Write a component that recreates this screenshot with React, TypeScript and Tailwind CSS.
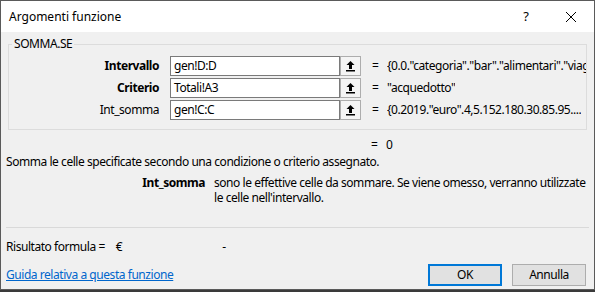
const font = { fontFamily: '"Noto Sans", "Open Sans", sans-serif' };

interface ArgRow {
  label: string;
  bold: boolean;
  value: string;
  result: string;
}

const rows: ArgRow[] = [
  { label: "Intervallo", bold: true, value: "gen!D:D", result: '{0.0."categoria"."bar"."alimentari"."viaggi"' },
  { label: "Criterio", bold: true, value: "Totali!A3", result: '"acquedotto"' },
  { label: "Int_somma", bold: false, value: "gen!C:C", result: '{0.2019."euro".4,5.152.180.30.85.95....' },
];

function RefButton() {
  return (
    <div className="shrink-0 w-[21px] h-[20px] border border-[#adadad] bg-[#f4f4f4] flex items-center justify-center">
      <svg width="11" height="12" viewBox="0 0 11 12">
        <path d="M5.5 1 L1.5 5 H4 V9 H7 V5 H9.5 Z" fill="#000" />
        <rect x="1" y="10" width="9" height="1.5" fill="#000" />
      </svg>
    </div>
  );
}

export default function App() {
  return (
    <div className="w-[595px] h-[292px] bg-[#3a3a3a] overflow-hidden text-[12px] text-black" style={font}>
      <div className="h-[290px] border border-[#5a5a5a] bg-[#f0f0f0] flex flex-col tracking-[-0.45px]">
        {/* Title bar */}
        <div className="h-[31px] bg-white flex items-center pl-2 pr-3 tracking-normal">
          <span className="text-[12px]">Argomenti funzione</span>
          <span className="ml-auto text-[13px] mr-[36px]">?</span>
          <svg width="12" height="12" viewBox="0 0 12 12" className="mr-[5px]">
            <path d="M1 1 L11 11 M11 1 L1 11" stroke="#000" strokeWidth="1" />
          </svg>
        </div>

        {/* Group box */}
        <fieldset className="mx-[7px] mt-[5px] border border-[#dcdcdc] h-[93px] px-0 min-w-0">
          <legend className="ml-[3px] px-[2px] leading-[14px]">SOMMA.SE</legend>
          <div className="flex flex-col gap-[2px] mt-[5px] overflow-hidden">
            {rows.map((row) => (
              <div key={row.label} className="flex items-center h-[20px]">
                <div className={`shrink-0 w-[150px] text-right ${row.bold ? "font-bold" : ""}`}>{row.label}</div>
                <div className="shrink-0 ml-[11px] w-[170px] h-[20px] bg-white border border-[#7a7a7a] flex items-center px-[3px]">
                  {row.value}
                </div>
                <RefButton />
                <span className="shrink-0 ml-[11px] w-[15px]">=</span>
                <span className="whitespace-nowrap overflow-hidden">{row.result}</span>
              </div>
            ))}
          </div>
        </fieldset>

        <div className="flex h-[18px] items-center mt-[6px]">
          <span className="ml-[370px] w-[15px]">=</span>
          <span>0</span>
        </div>
        <div className="pl-[5px] leading-[16px]">
          Somma le celle specificate secondo una condizione o criterio assegnato.
        </div>

        <div className="flex mt-[5px] leading-[15px]">
          <div className="w-[204px] text-right font-bold">Int_somma</div>
          <div className="ml-[9px] w-[378px]">
            sono le effettive celle da sommare. Se viene omesso, verranno utilizzate le celle nell'intervallo.
          </div>
        </div>

        <div className="mt-[22px] mx-[5px] border-t border-[#d9d9d9]" />

        <div className="flex items-center h-[16px] mt-[11px] pl-[5px]">
          <span>Risultato formula =</span>
          <span className="ml-[11px]">€</span>
          <span className="ml-[100px]">-</span>
        </div>

        <div className="flex items-center mt-[9px] pl-[5px] pr-[8px]">
          <a className="text-[#0066cc] underline">Guida relativa a questa funzione</a>
          <button className="ml-auto w-[74px] h-[22px] bg-[#e1e1e1] border-2 border-[#0078d7]">OK</button>
          <button className="ml-[10px] w-[74px] h-[22px] bg-[#e1e1e1] border border-[#adadad]">Annulla</button>
        </div>
      </div>
    </div>
  );
}
